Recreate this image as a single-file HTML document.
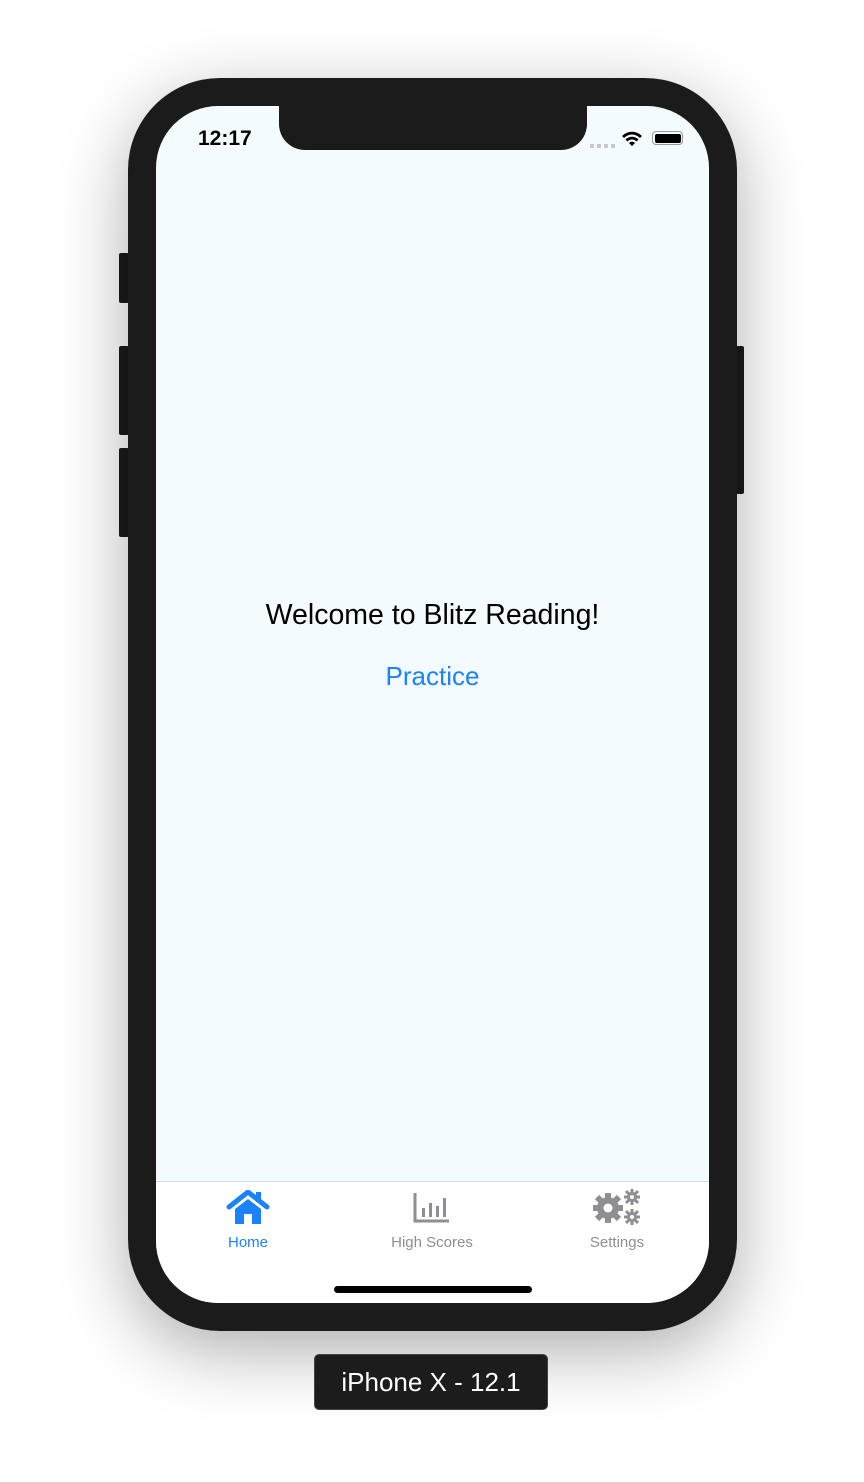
<!DOCTYPE html>
<html><head><style>
body{margin:0;width:864px;height:1482px;background:#fff;position:relative;overflow:hidden;font-family:"Liberation Sans",sans-serif}
.a{position:absolute}
.phone{left:128px;top:78px;width:609px;height:1253px;border-radius:92px;background:#1b1b1b;box-shadow:0 20px 70px rgba(0,0,0,.32)}
.btn{background:#1b1b1b;border-radius:2px}
.screen{left:156px;top:106px;width:553px;height:1197px;border-radius:62px;background:#f4fbfe;overflow:hidden}
.notch{left:123px;top:-2px;width:308px;height:46px;background:#1b1b1b;border-radius:0 0 26px 26px}
.tab{left:0;top:1075px;width:553px;height:122px;background:#fff;border-top:1px solid #d8dde0}
.lbl{font-size:15px;text-align:center;width:160px}
</style></head><body>
<div class="a btn" style="left:119px;top:253px;width:10px;height:50px"></div>
<div class="a btn" style="left:119px;top:346px;width:10px;height:89px"></div>
<div class="a btn" style="left:119px;top:448px;width:10px;height:89px"></div>
<div class="a btn" style="left:736px;top:346px;width:8px;height:148px"></div>
<div class="a phone"></div>
<div class="a screen">
 <div class="a notch"></div>
 <div class="a" style="left:42px;top:21px;font-size:21px;font-weight:bold;color:#000">12:17</div>
 <div class="a" style="left:434px;top:38px;width:26px;height:4px;background:repeating-linear-gradient(90deg,#c8c8c8 0 4px,transparent 4px 7px)"></div>
 <svg class="a" style="left:465px;top:24px" width="22" height="17" viewBox="0 0 22 17"><path d="M1 6a14 14 0 0 1 20 0l-2 2a11 11 0 0 0-16 0z M4.5 9.5a9 9 0 0 1 13 0l-2 2a6 6 0 0 0-9 0z M8 13a4 4 0 0 1 6 0l-3 3z" fill="#000"/></svg>
 <div class="a" style="left:496px;top:25px;width:31px;height:14px;border:1.5px solid #999;border-radius:4px;box-sizing:border-box;padding:1.5px"><div style="background:#000;height:100%;border-radius:2px"></div></div>
 <div class="a" style="left:0;top:493px;width:553px;text-align:center;font-size:28.5px;color:#000">Welcome to Blitz Reading!</div>
 <div class="a" style="left:0;top:555px;width:553px;text-align:center;font-size:26px;color:#1a82fb">Practice</div>
 <div class="a tab">
  <svg class="a" style="left:70px;top:8px" width="44" height="36" viewBox="0 0 44 36"><path d="M3 17L22 2l19 15" stroke="#1a82fb" stroke-width="5" fill="none" stroke-linecap="round"/><rect x="30" y="2" width="5" height="10" fill="#1a82fb"/><path d="M9 19L22 9l13 10v15H26v-10h-8v10H9z" fill="#1a82fb"/></svg>
  <div class="a lbl" style="left:12px;top:52px;color:#1a82fb">Home</div>
  <svg class="a" style="left:256px;top:8px" width="40" height="34" viewBox="0 0 40 34"><path d="M3 3v28h34" stroke="#8e8e93" stroke-width="3" fill="none"/><rect x="10" y="18" width="3" height="9" fill="#8e8e93"/><rect x="17" y="13" width="3" height="14" fill="#8e8e93"/><rect x="24" y="16" width="3" height="11" fill="#8e8e93"/><rect x="31" y="8" width="3" height="19" fill="#8e8e93"/></svg>
  <div class="a lbl" style="left:196px;top:52px;color:#8e8e93">High Scores</div>
  <svg class="a" style="left:436px;top:6px" width="50" height="38" viewBox="0 0 50 38"><g fill="#8e8e93"><circle cx="16" cy="20" r="11"/><g stroke="#8e8e93" stroke-width="6"><path d="M16 5v30M1 20h30M5 9l22 22M27 9L5 31"/></g><circle cx="40" cy="9" r="5"/><path d="M40 1v16M32 9h16M34 3l12 12M46 3L34 15" stroke="#8e8e93" stroke-width="3"/><circle cx="40" cy="29" r="5"/><path d="M40 21v16M32 29h16M34 23l12 12M46 23L34 35" stroke="#8e8e93" stroke-width="3"/></g><circle cx="16" cy="20" r="4.5" fill="#fff"/><circle cx="40" cy="9" r="2" fill="#fff"/><circle cx="40" cy="29" r="2" fill="#fff"/></svg>
  <div class="a lbl" style="left:381px;top:52px;color:#8e8e93">Settings</div>
  <div class="a" style="left:178px;top:104px;width:198px;height:7px;border-radius:4px;background:#000"></div>
 </div>
</div>
<div class="a" style="left:314px;top:1354px;width:234px;height:56px;background:#1c1c1c;border-radius:5px;border:1px solid #444;box-sizing:border-box;color:#fff;font-size:26px;text-align:center;line-height:54px">iPhone X - 12.1</div>
</body></html>
